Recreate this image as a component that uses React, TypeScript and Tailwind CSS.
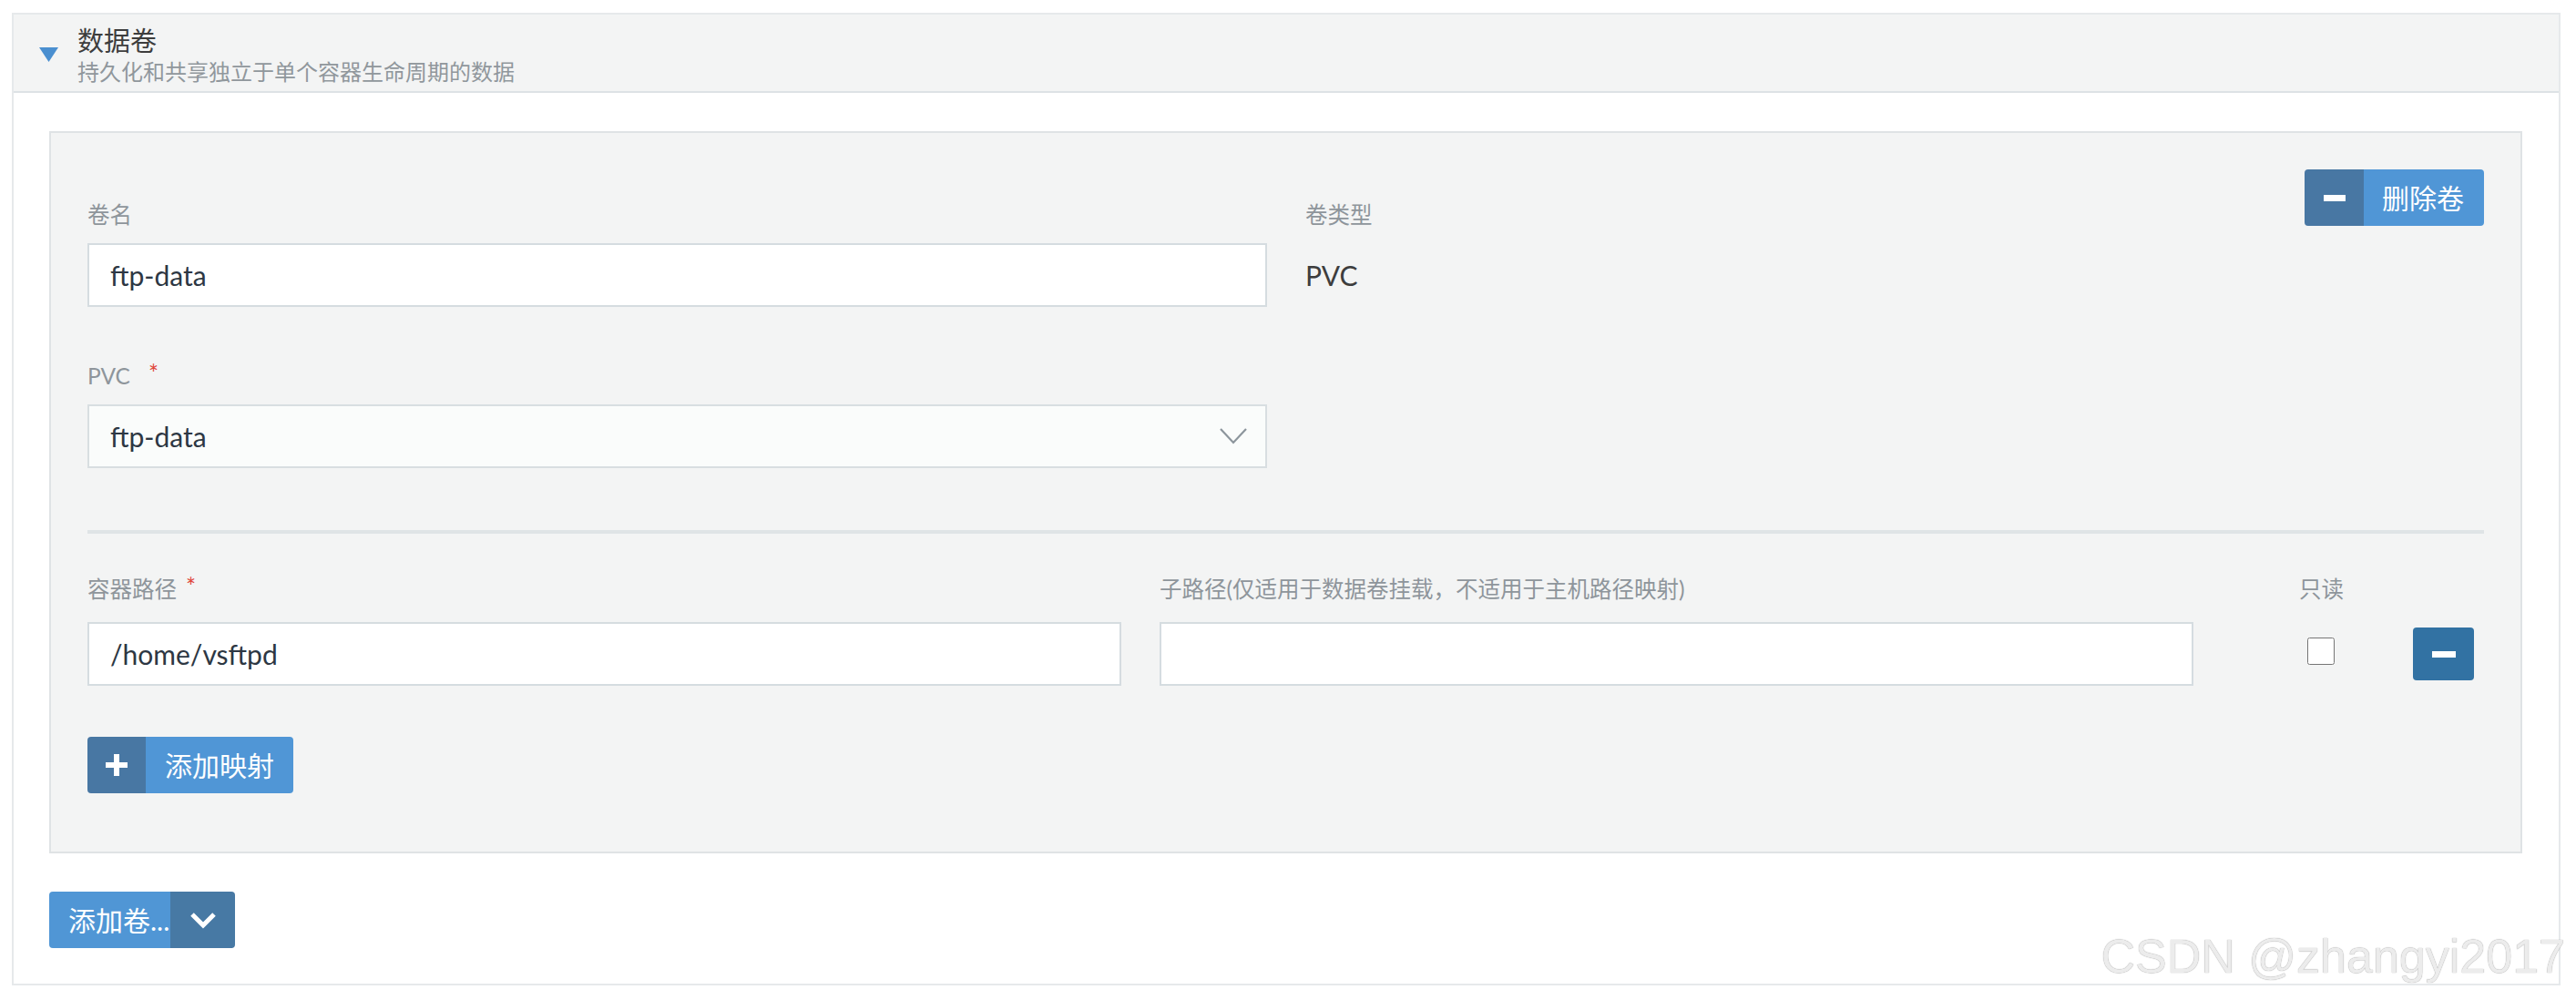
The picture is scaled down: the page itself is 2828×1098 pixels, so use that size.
import React from 'react'

const Minus = ({ w = 24 }: { w?: number }) => (
  <span className="block h-[7px] bg-white" style={{ width: w }} />
)

const Plus = () => (
  <svg width="24" height="24" viewBox="0 0 24 24">
    <rect x="9" y="0" width="6" height="24" fill="#fff" />
    <rect x="0" y="9" width="24" height="6" fill="#fff" />
  </svg>
)

const Label = ({ children, required, starGap = 10 }: { children: React.ReactNode; required?: boolean; starGap?: number }) => (
  <div className="flex items-start text-[24.5px] leading-[34px] text-[#8e959b] whitespace-nowrap">
    <span>{children}</span>
    {required && (
      <span className="text-[26px] text-[#e0463b] leading-[28px]" style={{ marginLeft: starGap }}>*</span>
    )}
  </div>
)

export default function App() {
  return (
    <div className="relative min-h-screen bg-white pt-[14px] pl-[13px] pr-[17px] font-['Lato','Noto_Sans_CJK_SC',sans-serif]">
      <div className="border-2 border-[#e6e9eb]">
        {/* Header */}
        <div className="flex items-center gap-[21px] bg-[#f3f4f4] border-b-2 border-[#dde2e5] pl-[28px] pt-[10px] pb-[6px]">
          <svg width="21" height="16" viewBox="0 0 21 16">
            <polygon points="0,0 21,0 10.5,16" fill="#4a8fd0" />
          </svg>
          <div>
            <div className="text-[29px] leading-[38px] text-[#3d3d3d]">数据卷</div>
            <div className="text-[24px] leading-[30px] text-[#90979c]">持久化和共享独立于单个容器生命周期的数据</div>
          </div>
        </div>

        {/* Body */}
        <div className="pt-[42px] pl-[39px] pr-[40px] pb-[39px]">
          <div className="border-2 border-[#dfe3e5] bg-[#f3f4f4] px-[40px] pt-[40px] pb-[64px]">
            {/* Volume name / type / delete */}
            <div className="flex items-start">
              <div className="w-[1295px] pt-[33px]">
                <div className="mb-[14px]"><Label>卷名</Label></div>
                <input
                  readOnly
                  value="ftp-data"
                  className="w-full h-[70px] border-2 border-[#d5dce0] bg-white pl-[23px] text-[30px] text-[#2d3743] outline-none"
                />
              </div>
              <div className="ml-[42px] flex-1 pt-[33px]">
                <div className="mb-[14px]"><Label>卷类型</Label></div>
                <div className="h-[70px] flex items-center text-[30px] text-[#3d3d3d]">PVC</div>
              </div>
              <button className="flex h-[62px] rounded-[4px] overflow-hidden text-white">
                <span className="w-[65px] h-full bg-[#4877a3] flex items-center justify-center">
                  <Minus />
                </span>
                <span className="h-full bg-[#5096d6] pl-[20px] pr-[22px] flex items-center text-[30px]">删除卷</span>
              </button>
            </div>

            {/* PVC select */}
            <div className="mt-[59px] w-[1295px]">
              <div className="mb-[14px]"><Label required starGap={20}>PVC</Label></div>
              <div className="h-[70px] border-2 border-[#d8dee1] bg-[#fafcfb] flex items-center justify-between pl-[23px] pr-[20px]">
                <span className="text-[30px] text-[#2d3743]">ftp-data</span>
                <svg width="30" height="18" viewBox="0 0 30 18">
                  <polyline points="1,1 15,16 29,1" fill="none" stroke="#8c959c" strokeWidth="2.2" />
                </svg>
              </div>
            </div>

            <div className="mt-[68px] h-[4px] bg-[#dfe4e6]" />

            {/* Mount rows */}
            <div className="mt-[44px] flex items-end">
              <div className="w-[1135px]">
                <div className="mb-[19px]"><Label required>容器路径</Label></div>
                <input
                  readOnly
                  value="/home/vsftpd"
                  className="w-full h-[70px] border-2 border-[#d5dce0] bg-white pl-[23px] text-[30px] text-[#2d3743] outline-none"
                />
              </div>
              <div className="ml-[42px] w-[1135px]">
                <div className="mb-[19px]"><Label>子路径(仅适用于数据卷挂载，不适用于主机路径映射)</Label></div>
                <input
                  readOnly
                  value=""
                  className="w-full h-[70px] border-2 border-[#d5dce0] bg-white pl-[23px] text-[30px] text-[#2d3743] outline-none"
                />
              </div>
              <div className="ml-[116px] flex flex-col">
                <div className="mb-[19px]"><Label>只读</Label></div>
                <div className="h-[70px] flex items-center pl-[9px] pb-[6px]">
                  <input type="checkbox" className="w-[30px] h-[30px] m-0" />
                </div>
              </div>
              <div className="ml-[76px] h-[70px] flex items-center">
                <button className="w-[67px] h-[58px] rounded-[4px] bg-[#3272a3] flex items-center justify-center">
                  <Minus w={26} />
                </button>
              </div>
            </div>

            <button className="mt-[56px] flex h-[62px] rounded-[4px] overflow-hidden text-white">
              <span className="w-[64px] h-full bg-[#4877a3] flex items-center justify-center">
                <Plus />
              </span>
              <span className="h-full bg-[#5096d6] pl-[21px] pr-[21px] flex items-center text-[30px]">添加映射</span>
            </button>
          </div>

          {/* Add volume */}
          <button className="mt-[42px] flex h-[62px] rounded-[4px] overflow-hidden text-white">
            <span className="w-[133px] h-full bg-[#5096d5] pl-[21px] flex items-center text-[30px] whitespace-nowrap overflow-hidden">添加卷...</span>
            <span className="w-[71px] h-full bg-[#4779a4] flex items-center justify-center">
              <svg width="30" height="19" viewBox="0 0 30 19">
                <polyline points="3,3 15,15 27,3" fill="none" stroke="#fff" strokeWidth="5" />
              </svg>
            </span>
          </button>
        </div>
      </div>

      <div className="absolute top-[1024px] right-[12px] text-[52px] leading-none font-['Liberation_Sans',Arial,sans-serif] text-[#ececec] [text-shadow:0_0_1px_rgba(0,0,0,0.5)] whitespace-nowrap">
        CSDN @zhangyi2017
      </div>
    </div>
  )
}
